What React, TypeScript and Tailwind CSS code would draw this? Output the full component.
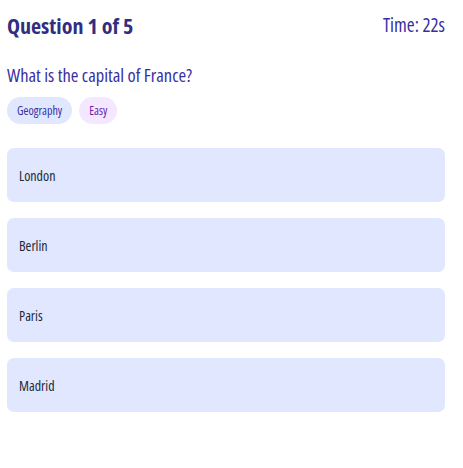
const options = ["London", "Berlin", "Paris", "Madrid"]

export default function App() {
  return (
    <div className="min-h-[468px] bg-white pl-[7px] pr-[18px] pt-[10px] font-['Open_Sans',sans-serif] font-stretch-[75%]">
      <div className="flex items-center justify-between">
        <h1 className="text-[22px] font-bold leading-[30px] text-[#312e81]">Question 1 of 5</h1>
        <span className="text-[19px] leading-[30px] text-[#3730a3]">Time: 22s</span>
      </div>

      <p className="mt-[22px] text-[18.5px] leading-[26px] text-[#3730a3]">What is the capital of France?</p>

      <div className="mt-[9px] flex gap-[7px]">
        <span className="rounded-full bg-[#e0e7ff] px-[10px] py-[5px] text-[12px] leading-[17px] text-[#3730a3]">Geography</span>
        <span className="rounded-full bg-[#f3e8ff] px-[10px] py-[5px] text-[12px] leading-[17px] text-[#6b21a8]">Easy</span>
      </div>

      <div className="mt-[24px] flex flex-col gap-[16px]">
        {options.map((opt) => (
          <button
            key={opt}
            className="flex h-[54px] items-center rounded-[7px] bg-[#e0e7ff] px-[12px] text-left text-[14px] text-[#1f2937]"
          >
            {opt}
          </button>
        ))}
      </div>
    </div>
  )
}
